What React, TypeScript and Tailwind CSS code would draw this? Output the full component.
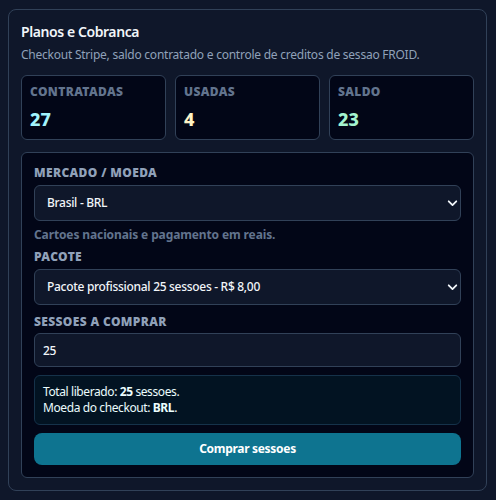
import { useState } from 'react';

const Chevron = () => (
  <svg
    className="pointer-events-none absolute right-[3px] top-1/2 h-[11px] w-[11px] -translate-y-1/2 text-slate-100"
    viewBox="0 0 16 16"
    fill="none"
    stroke="currentColor"
    strokeWidth="2.6"
    strokeLinecap="round"
    strokeLinejoin="round"
  >
    <path d="M2.5 5.5l5.5 5.5 5.5-5.5" />
  </svg>
);

const StatCard = ({ label, value, color }: { label: string; value: number; color: string }) => (
  <div className="flex-1 rounded-md border border-slate-700 bg-[#020617] px-2 pt-2 pb-2">
    <div className="text-xs leading-4 font-black tracking-[0.03em] text-slate-500">{label}</div>
    <div className={`mt-[7px] text-lg leading-6 font-extrabold tracking-normal ${color}`}>{value}</div>
  </div>
);

export default function App() {
  const [market, setMarket] = useState('BR');
  const [pack, setPack] = useState('pro25');
  const [qty, setQty] = useState('25');

  return (
    <div className="min-h-[500px] bg-[#0f172a] pt-[9px] pl-2 pr-[9px] font-['Noto_Sans',sans-serif] tracking-[-0.025em]">
      <div className="rounded-lg border border-slate-700 bg-[#0f172a] px-3 pt-3 pb-3">
        <h2 className="text-sm leading-5 font-semibold tracking-[-0.03em] text-slate-100">Planos e Cobranca</h2>
        <p className="mt-[5px] text-xs leading-4 tracking-[-0.02em] text-slate-400">
          Checkout Stripe, saldo contratado e controle de creditos de sessao FROID.
        </p>

        {/* saldo de sessoes */}
        <div className="mt-3 flex gap-[9px]">
          <StatCard label="CONTRATADAS" value={27} color="text-cyan-200" />
          <StatCard label="USADAS" value={4} color="text-amber-100" />
          <StatCard label="SALDO" value={23} color="text-emerald-200" />
        </div>

        <div className="mt-3 rounded-md border border-slate-700 bg-[#020617] p-3">
          <label className="block text-xs leading-4 font-black tracking-[0.03em] text-slate-400">MERCADO / MOEDA</label>
          <div className="relative mt-1">
            <select
              value={market}
              onChange={e => setMarket(e.target.value)}
              className="h-9 w-full appearance-none rounded-md border border-slate-700 bg-[#0f172a] pl-3 text-xs font-medium tracking-[-0.025em] text-slate-100 outline-none"
            >
              <option value="BR">Brasil - BRL</option>
              <option value="US">Estados Unidos - USD</option>
            </select>
            <Chevron />
          </div>
          <p className="mt-1.5 text-xs leading-4 font-bold tracking-[-0.01em] text-slate-500">
            Cartoes nacionais e pagamento em reais.
          </p>

          <label className="mt-1.5 block text-xs leading-4 font-black tracking-[0.03em] text-slate-400">PACOTE</label>
          <div className="relative mt-1">
            <select
              value={pack}
              onChange={e => setPack(e.target.value)}
              className="h-9 w-full appearance-none rounded-md border border-slate-700 bg-[#0f172a] pl-3 text-xs font-medium tracking-[-0.025em] text-slate-100 outline-none"
            >
              <option value="pro25">Pacote profissional 25 sessoes - R$ 8,00</option>
              <option value="pro50">Pacote profissional 50 sessoes - R$ 15,00</option>
            </select>
            <Chevron />
          </div>

          <label className="mt-[9px] block text-xs leading-4 font-black tracking-[0.03em] text-slate-400">SESSOES A COMPRAR</label>
          <input
            value={qty}
            onChange={e => setQty(e.target.value)}
            className="mt-[3px] h-[34px] w-full rounded-md border border-slate-700 bg-[#0f172a] pl-2 text-xs font-medium tracking-[-0.025em] text-slate-100 outline-none"
          />

          <div className="mt-2 rounded-md border border-[#15324a] bg-[#021322] px-2 pt-2 pb-2 text-xs leading-4 text-cyan-50">
            <div>
              Total liberado: <span className="font-bold">{qty}</span> sessoes.
            </div>
            <div>
              Moeda do checkout: <span className="font-bold">BRL</span>.
            </div>
          </div>

          <button className="mt-2 h-8 w-full rounded-lg bg-[#0e7490] text-xs font-bold tracking-[-0.025em] text-white">
            Comprar sessoes
          </button>
        </div>
      </div>
    </div>
  );
}
